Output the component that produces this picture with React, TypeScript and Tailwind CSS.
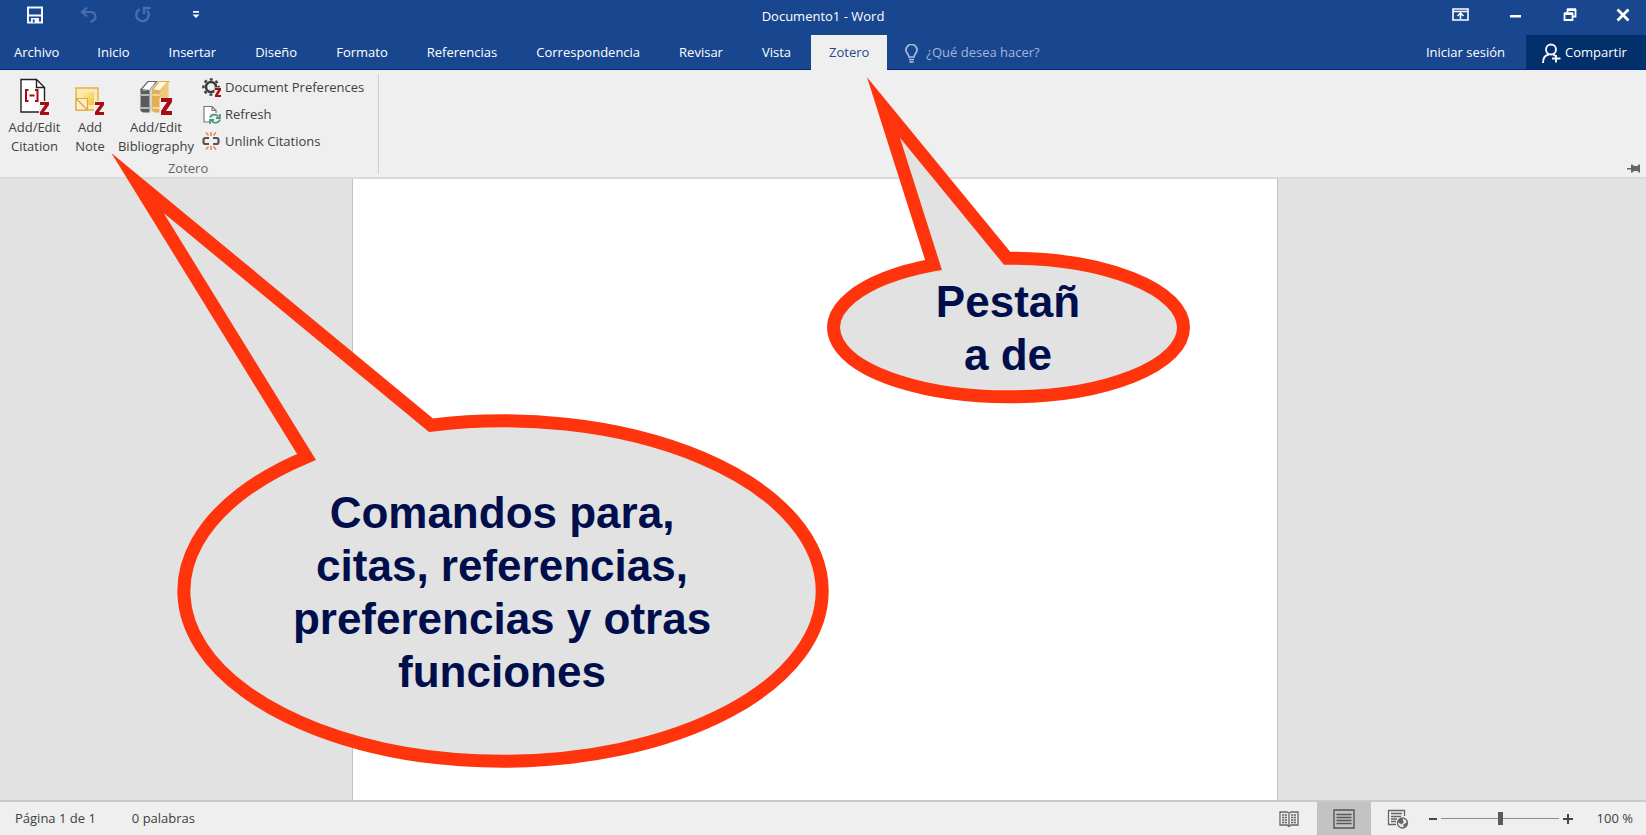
import type { ReactNode } from "react";

type CalloutProps = { className: string; width: number; height: number; path: string; children: ReactNode };

const TABS_LEFT = ["Inicio", "Insertar", "Diseño", "Formato", "Referencias", "Correspondencia", "Revisar", "Vista"];

function SaveIcon() {
  return (
    <svg width="18" height="18" viewBox="0 0 18 18" fill="none" stroke="#f4f7ff" strokeWidth="2">
      <path d="M2 1.500h14v15H2z" />
      <path d="M2 9.500h14" strokeWidth="2" />
      <path d="M5 12h8v4.500H5z" fill="#f4f7ff" stroke="none" />
      <path d="M6.800 13.500h1.800v3H6.800z" fill="#19478f" stroke="none" />
    </svg>
  );
}

function UndoIcon() {
  return (
    <svg width="18" height="18" viewBox="0 0 18 18" fill="none" stroke="#4a6ead" strokeWidth="2.200">
      <path d="M7 1.500 2 6l5 4.500M2.500 6H11a4.500 4.500 0 0 1 2 8.500L10.500 16" />
    </svg>
  );
}

function RedoIcon() {
  return (
    <svg width="18" height="18" viewBox="0 0 18 18" fill="none" stroke="#4a6ead" strokeWidth="2.400">
      <path d="M5.500 3.400A6.300 6.300 0 1 0 13 4.500" />
      <path d="M10 8V2h6.500" />
    </svg>
  );
}

function ZMark({ x, y, w, h, t }: { x: number; y: number; w: number; h: number; t: number }) {
  const d = `M${x} ${y}h${w}v${t}L${x + t + 1} ${y + h - t}H${x + w}v${t}H${x}v${-t}L${x + w - t - 1} ${y + t}H${x}z`;
  return <path d={d} fill="#a50d12" />;
}

function CitationIcon() {
  return (
    <svg width="30" height="38" viewBox="0 0 30 38" fill="none">
      <path d="M1 1.500h15.500l8 8V34H1z" fill="#fff" stroke="#222" strokeWidth="1.400" />
      <path d="M16.500 1.500v8h8" stroke="#222" strokeWidth="1.400" />
      <path d="M8.500 12H6v11h2.500M15 12h2.500v11H15M9.500 17.500h5" stroke="#a50d12" strokeWidth="2" />
      <path d="M19 23h11v15H19z" fill="#efefef" />
      <ZMark x={20} y={24} w={9} h={13} t={3} />
    </svg>
  );
}

function NoteIcon() {
  return (
    <svg width="30" height="38" viewBox="0 0 30 38" fill="none">
      <defs>
        <linearGradient id="note" x1="0" y1="0" x2="1" y2="1">
          <stop offset="0" stopColor="#fdf0b0" />
          <stop offset="1" stopColor="#f5c430" />
        </linearGradient>
      </defs>
      <path d="M1 10h22v22H1z" fill="#fbe9b4" stroke="#e3b14c" strokeWidth="1.400" />
      <path d="M6 14h13v13H6z" fill="url(#note)" />
      <path d="M1 20.500h11.500V32H1zM1 20.500 12.500 32" fill="#fdeec4" stroke="#dba844" strokeWidth="1.200" />
      <path d="M19 23h11v15H19z" fill="#efefef" />
      <ZMark x={20} y={24} w={9} h={13} t={3} />
    </svg>
  );
}

function BooksIcon() {
  return (
    <svg width="32" height="38" viewBox="0 0 32 38" fill="none">
      <path d="M1 11.500 8 3.500h8.500l-7 9z" fill="#fff" stroke="#666" strokeWidth="1.200" />
      <path d="M9.500 12.500 14.500 6v24l-5 4.500z" fill="#d4d4d4" />
      <path d="M.5 11 4 13h5.500v21.500H3L.5 33z" fill="#5a5a5a" />
      <path d="M1 17h8M1 30h8" stroke="#d8d8d8" strokeWidth="1.500" />
      <path d="M12.500 11.500 19 3.500h9.500L20 13z" fill="#fff6dd" stroke="#e0ac52" strokeWidth="1.200" />
      <path d="M20 13l8.500-9.500V20H20z" fill="#f0c878" />
      <path d="M12 11l3 2h5v21.500h-5.500L12 33z" fill="#e3ae55" />
      <path d="M12.500 17H20M12.500 30H20" stroke="#f8e3b4" strokeWidth="1.500" />
      <path d="M19.500 20H32v18H19.500z" fill="#efefef" />
      <ZMark x={21} y={20} w={11} h={17} t={4} />
    </svg>
  );
}

function GearIcon() {
  return (
    <svg width="20" height="20" viewBox="0 0 20 20" fill="none">
      <circle cx="9" cy="9" r="5" stroke="#3d3d3d" strokeWidth="2.600" />
      <circle cx="9" cy="9" r="7.600" stroke="#3d3d3d" strokeWidth="2.400" strokeDasharray="2.900 3.070" strokeDashoffset="1.450" />
      <path d="M12.500 9.500H20V20h-7.500z" fill="#efefef" />
      <ZMark x={13} y={10} w={6} h={9} t={2} />
    </svg>
  );
}

function RefreshIcon() {
  return (
    <svg width="20" height="20" viewBox="0 0 20 20" fill="none">
      <path d="M2 1.500h8l4 4V17H2z" fill="#fff" stroke="#777" strokeWidth="1.200" />
      <path d="M10 1.500v4h4" stroke="#777" strokeWidth="1.200" />
      <path d="M7 8h12v11H7z" fill="#efefef" />
      <path d="M8 12.500c1-3 6-4 8.500-1M18 9v4h-4M18 14.500c-1 3.500-6 4.500-8.500 1.500M8 19v-4h4" stroke="#4f9c7c" strokeWidth="1.800" />
    </svg>
  );
}

function UnlinkIcon() {
  return (
    <svg width="20" height="20" viewBox="0 0 20 20" fill="none">
      <path d="M7 6H3.500a2 2 0 0 0-2 2v2a2 2 0 0 0 2 2H7M11 6h3.500a2 2 0 0 1 2 2v2a2 2 0 0 1-2 2H11" stroke="#555" strokeWidth="2.200" />
      <path d="M9 0v4M4 .500l2.500 3M14 .500l-2.500 3M9 14v4M4 17.500l2.500-3M14 17.500l-2.500-3" stroke="#ee8040" strokeWidth="1.500" />
    </svg>
  );
}

function LargeCommand({ icon, lines, className }: { icon: ReactNode; lines: [string, string]; className: string }) {
  return (
    <button type="button" className={`flex flex-col items-center pt-1 text-[13px] leading-[19px] whitespace-nowrap ${className}`}>
      {icon}
      <span className="mt-[2px]">{lines[0]}</span>
      <span>{lines[1]}</span>
    </button>
  );
}

function SmallCommand({ icon, label }: { icon: ReactNode; label: string }) {
  return (
    <button type="button" className="flex h-[27px] items-center gap-[3px] text-[13px] whitespace-nowrap">
      {icon}
      {label}
    </button>
  );
}

function Callout({ className, width, height, path, children }: CalloutProps) {
  return (
    <div className={`pointer-events-none absolute ${className}`}>
      <svg width={width} height={height} viewBox={`0 0 ${width} ${height}`} className="block">
        <path d={path} fill="#e2e2e2" stroke="#ff330c" strokeWidth="13" strokeMiterlimit="20" />
      </svg>
      {children}
    </div>
  );
}

export default function App() {
  return (
    <div className="relative flex min-h-screen flex-col overflow-hidden bg-[#e2e2e2] font-['Open_Sans','Noto_Sans',sans-serif] text-[#404040]">
      <header className="border-b border-[#00257d] bg-[#19478f] text-white">
        <div className="relative flex h-[35px] items-start justify-between pt-[6px]">
          <div className="flex items-center pl-[26px]">
            <button type="button" aria-label="Guardar"><SaveIcon /></button>
            <button type="button" aria-label="Deshacer" className="ml-9"><UndoIcon /></button>
            <button type="button" aria-label="Rehacer" className="ml-9"><RedoIcon /></button>
            <button type="button" aria-label="Personalizar" className="ml-10">
              <svg width="8" height="18" viewBox="0 0 8 18" fill="#f4f7ff"><path d="M1 5h6v1.800H1zM.5 8.500h7L4 12z" /></svg>
            </button>
          </div>
          <h1 className="absolute inset-x-0 top-[6px] text-center text-[13px] leading-5 font-medium">Documento1 - Word</h1>
          <div className="relative flex items-center gap-[37px] pr-4">
            <button type="button" aria-label="Opciones de la cinta">
              <svg width="17" height="18" viewBox="0 0 17 18" fill="none" stroke="#fff" strokeWidth="1.600">
                <path d="M1 3h15v11H1zM1 5.500h15M8.500 13V7.500M5.500 10l3-2.800 3 2.800" />
              </svg>
            </button>
            <button type="button" aria-label="Minimizar">
              <svg width="18" height="18" viewBox="0 0 18 18"><path d="M4 9h11v2.500H4z" fill="#fff" /></svg>
            </button>
            <button type="button" aria-label="Restaurar">
              <svg width="18" height="18" viewBox="0 0 18 18" fill="none" stroke="#fff" strokeWidth="1.800">
                <path d="M3.500 8h8v6h-8zM6.500 7.500V4h8v6.500H12" />
                <path d="M6 3.500h9M3 7.500h9" strokeWidth="2.400" />
              </svg>
            </button>
            <button type="button" aria-label="Cerrar">
              <svg width="14" height="18" viewBox="0 0 14 18" stroke="#fff" strokeWidth="2.800"><path d="m1.500 3.500 11 11M12.500 3.500l-11 11" /></svg>
            </button>
          </div>
        </div>
        <nav className="flex h-[34px] items-stretch gap-px text-[13px] font-medium">
          <button type="button" className="pt-[2px] pr-[18px] pl-[14px]">Archivo</button>
          {TABS_LEFT.map((tab) => (
            <button type="button" key={tab} className="px-[19px] pt-[2px]">{tab}</button>
          ))}
          <button type="button" className="-mb-[2px] bg-[#efefef] px-[18px] text-[#1f468e]">Zotero</button>
          <label className="ml-[17px] flex items-center gap-2 pt-[2px] font-normal">
            <svg width="13" height="19" viewBox="0 0 13 19" fill="none" stroke="#a9bbdc" strokeWidth="1.700">
              <path d="M4 13c0-3-3-3.500-3-7a5.500 5.500 0 0 1 11 0c0 3.500-3 4-3 7zM4 15.500h5M4.500 17.800h4" />
            </svg>
            <input aria-label="¿Qué desea hacer?" placeholder="¿Qué desea hacer?" className="w-40 bg-transparent outline-none placeholder:text-[#a3b5d8]" />
          </label>
          <div className="ml-auto flex items-stretch">
            <button type="button" className="px-[21px] pt-[2px]">Iniciar sesión</button>
            <button type="button" className="flex w-[120px] items-center gap-1 bg-[#032f6b] pt-[2px] pl-4">
              <svg width="19" height="20" viewBox="0 0 19 20" fill="none" stroke="#f4f7ff" strokeWidth="1.900">
                <circle cx="9" cy="6.500" r="5" />
                <path d="M1 20c0-5 2.500-8 6-8.500M11 11l2 2M14 12v7.500M10 15.500h8.500" />
              </svg>
              Compartir
            </button>
          </div>
        </nav>
      </header>

      <section aria-label="Zotero" className="flex justify-between border-b-2 border-[#dadada] bg-[#efefef] pt-[4px]">
        <div className="mb-[3px] flex flex-col border-r border-[#cfcfcf] pr-[14px] pl-[6px]">
          <div className="flex items-start">
            <LargeCommand icon={<CitationIcon />} lines={["Add/Edit", "Citation"]} className="w-[57px]" />
            <LargeCommand icon={<NoteIcon />} lines={["Add", "Note"]} className="w-[54px]" />
            <LargeCommand icon={<BooksIcon />} lines={["Add/Edit", "Bibliography"]} className="w-[78px]" />
            <div className="ml-[7px] flex flex-col">
              <SmallCommand icon={<GearIcon />} label="Document Preferences" />
              <SmallCommand icon={<RefreshIcon />} label="Refresh" />
              <SmallCommand icon={<UnlinkIcon />} label="Unlink Citations" />
            </div>
          </div>
          <span className="pt-[6px] pl-[6px] text-center text-[13px] leading-[12px] text-[#666]">Zotero</span>
        </div>
        <button type="button" aria-label="Anclar la cinta" className="mr-[6px] mb-[3px] self-end">
          <svg width="13" height="11" viewBox="0 0 13 11" fill="#666"><path d="M0 5h4V1.500h1.500L7 3h3.500l1-1.500H13v8h-1.500l-1-1.500H7L5.500 9.500H4V6.500H0z" /></svg>
        </button>
      </section>

      <main className="flex flex-1 justify-center pr-4">
        <div className="w-[926px] max-w-full border-x border-[#c2c2c2] bg-white" />
      </main>

      <footer className="flex h-[35px] items-center border-t-2 border-[#cacaca] bg-[#efefef] text-[13px]">
        <span className="pl-[15px]">Página 1 de 1</span>
        <span className="pl-9">0 palabras</span>
        <div className="ml-auto flex items-center self-stretch">
          <button type="button" aria-label="Modo de lectura" className="mr-[18px]">
            <svg width="20" height="18" viewBox="0 0 20 18" fill="none" stroke="#666" strokeWidth="1.300">
              <path d="M1 2h7l2 1 2-1h7v13h-7l-2 1.500L8 15H1zM10 3v14" />
              <path d="M3 5h5M3 7.500h5M3 10h5M3 12.500h5M12 5h5M12 7.500h5M12 10h5M12 12.500h5" strokeDasharray="2.200 .6" />
            </svg>
          </button>
          <button type="button" aria-label="Diseño de impresión" className="flex w-[54px] items-center justify-center self-stretch bg-[#c3c3c3]">
            <svg width="22" height="20" viewBox="0 0 22 20" fill="none" stroke="#555" strokeWidth="1.400">
              <path d="M1 1h20v18H1zM3.500 5.500h15M3.500 8.500h15M3.500 11.500h15M3.500 14.500h15" />
            </svg>
          </button>
          <button type="button" aria-label="Diseño web" className="ml-4">
            <svg width="22" height="20" viewBox="0 0 22 20" fill="none" stroke="#666" strokeWidth="1.300">
              <path d="M17.500 7V1.500h-16v14H9M4 4.500h11M4 7.500h10M4 10h6M4 12.500h5" />
              <circle cx="15.500" cy="14" r="5" fill="#efefef" />
              <path d="M11 12c2-3 5-3 5-1s2 1 0 3-1 2-2 1-3-1-3-3zM16 16l4-3v3l-3 2.500z" fill="#666" stroke="none" />
            </svg>
          </button>
          <button type="button" aria-label="Alejar" className="ml-5">
            <svg width="8" height="10" viewBox="0 0 8 10"><path d="M0 4h8v2H0z" fill="#444" /></svg>
          </button>
          <input
            type="range"
            aria-label="Zoom"
            defaultValue={50}
            className="mx-1 h-4 w-[118px] appearance-none bg-transparent [&::-webkit-slider-runnable-track]:h-px [&::-webkit-slider-runnable-track]:bg-[#8c8c8c] [&::-webkit-slider-thumb]:-mt-[6px] [&::-webkit-slider-thumb]:h-[13px] [&::-webkit-slider-thumb]:w-[5px] [&::-webkit-slider-thumb]:appearance-none [&::-webkit-slider-thumb]:bg-[#5a5a5a]"
          />
          <button type="button" aria-label="Acercar">
            <svg width="10" height="10" viewBox="0 0 10 10"><path d="M0 4h10v2H0zM4 0h2v10H4z" fill="#444" /></svg>
          </button>
          <span className="w-[73px] pr-[13px] text-right">100 %</span>
        </div>
      </footer>

      <Callout
        className="top-[70px] left-[820px]"
        width={376}
        height={345}
        path="M187 188.200 63.500 37.500 113.500 194.900A175 69.300 0 0 0 188.500 326.800A175 69.300 0 0 0 363.500 257.500A175 69.300 0 0 0 187 188.200z"
      >
        <p className="absolute inset-x-0 top-[205px] mx-auto w-[160px] text-center font-['Liberation_Sans',Arial,sans-serif] text-[44px] leading-[53px] font-bold text-[#000f4b]">
          Pestañ
          <br />a de
        </p>
      </Callout>
      <Callout
        className="top-[140px] left-[100px]"
        width={740}
        height={640}
        path="M331 285.200 37.500 43 206.500 316.900A319.200 170.200 0 0 0 403 621.200A319.200 170.200 0 0 0 722.200 451A319.200 170.200 0 0 0 331 285.200z"
      >
        <p className="absolute top-[346px] left-[182px] w-[440px] text-center font-['Liberation_Sans',Arial,sans-serif] text-[44px] leading-[53px] font-bold text-[#000f4b]">
          Comandos para, citas, referencias, preferencias y otras funciones
        </p>
      </Callout>
    </div>
  );
}
